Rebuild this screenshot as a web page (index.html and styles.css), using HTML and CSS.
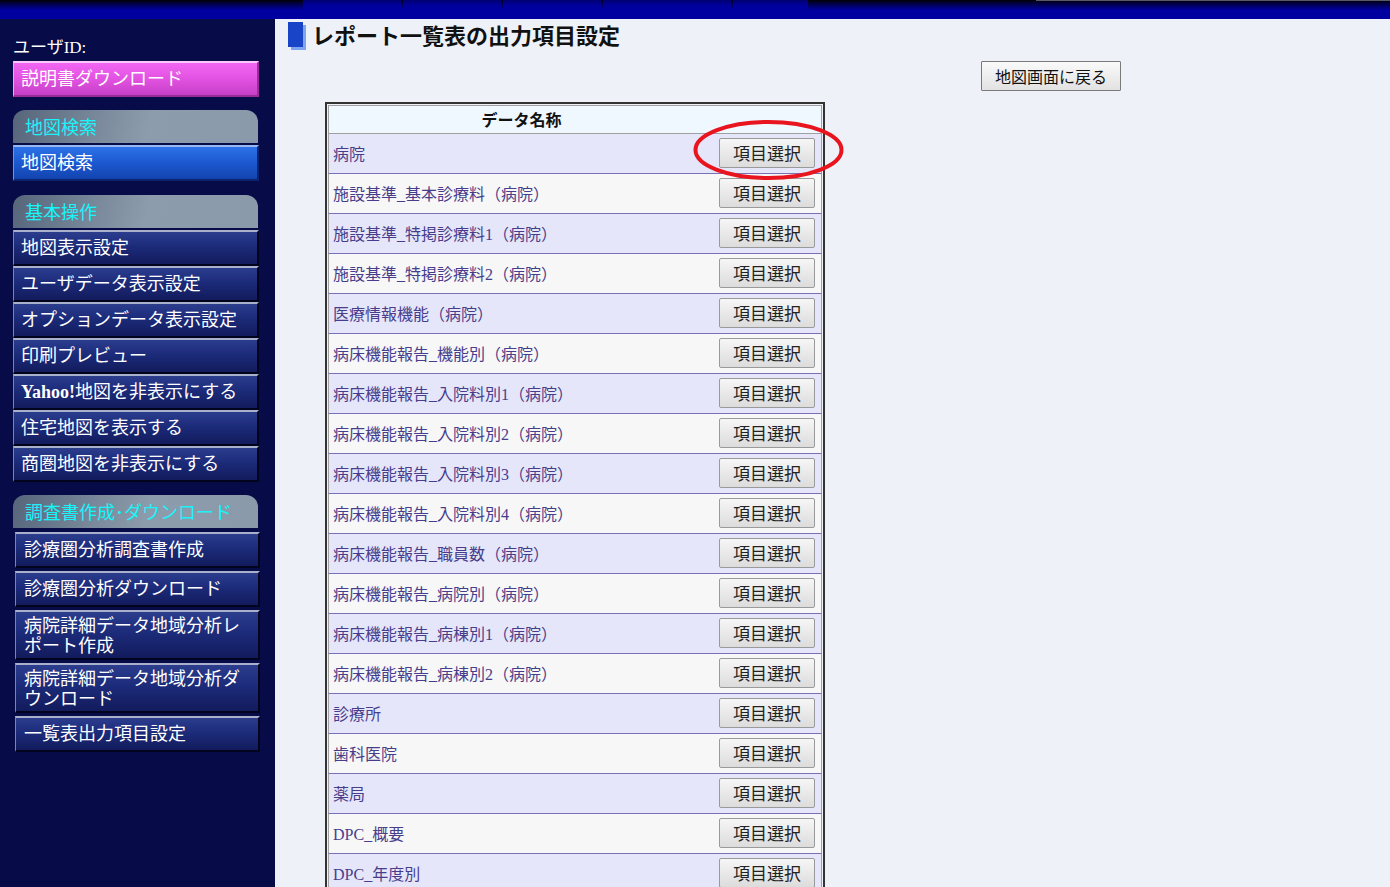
FILE: index.html
```html
<!DOCTYPE html>
<html lang="ja">
<head>
    <meta charset="UTF-8">
    <title>レポート一覧表の出力項目設定</title>
    <link rel="stylesheet" href="styles.css">
</head>
<body>

<div class="topbar">
    <div class="tb-dark"></div>
    <div class="tb-tab tab1"></div>
    <div class="tb-tab tab2"></div>
    <div class="tb-tab tab3"></div>
    <div class="tb-tab tab4"></div>
    <div class="tb-tab tab5"></div>
    <div class="tb-rest"><div class="tb-line"></div></div>
</div>

<div class="wrap">
    <div class="sidebar">
        <div class="userid">ユーザID:</div>
        <a class="menu-btn pink">説明書ダウンロード</a>

        <div class="group-head">地図検索</div>
        <a class="menu-btn blue">地図検索</a>

        <div class="group-head">基本操作</div>
        <a class="menu-btn">地図表示設定</a>
        <a class="menu-btn">ユーザデータ表示設定</a>
        <a class="menu-btn">オプションデータ表示設定</a>
        <a class="menu-btn">印刷プレビュー</a>
        <a class="menu-btn"><b>Yahoo!</b>地図を非表示にする</a>
        <a class="menu-btn">住宅地図を表示する</a>
        <a class="menu-btn">商圏地図を非表示にする</a>

        <div class="group-head">調査書作成･ダウンロード</div>
        <div class="sub-list">
            <a class="menu-btn">診療圏分析調査書作成</a>
            <a class="menu-btn">診療圏分析ダウンロード</a>
            <a class="menu-btn multi">病院詳細データ地域分析レポート作成</a>
            <a class="menu-btn multi">病院詳細データ地域分析ダウンロード</a>
            <a class="menu-btn">一覧表出力項目設定</a>
        </div>
    </div>

    <div class="main">
        <h1 class="page-title"><span class="title-mark"></span>レポート一覧表の出力項目設定</h1>

        <div class="back-row">
            <button class="back-btn">地図画面に戻る</button>
        </div>

        <table class="list-table">
            <tr>
                <th class="name-col">データ名称</th>
                <th class="sel-col"></th>
            </tr>
            <tr class="odd">
                <td class="name-col">病院</td>
                <td class="sel-col">
                    <span class="mark-wrap">
                        <button class="sel-btn">項目選択</button>
                        <svg class="red-mark" width="153" height="62" viewBox="0 0 153 62">
                            <ellipse cx="76.5" cy="31" rx="73" ry="28" fill="none" stroke="#e8141e" stroke-width="4"/>
                        </svg>
                    </span>
                </td>
            </tr>
            <tr class="even"><td class="name-col">施設基準_基本診療料（病院）</td><td class="sel-col"><button class="sel-btn">項目選択</button></td></tr>
            <tr class="odd"><td class="name-col">施設基準_特掲診療料1（病院）</td><td class="sel-col"><button class="sel-btn">項目選択</button></td></tr>
            <tr class="even"><td class="name-col">施設基準_特掲診療料2（病院）</td><td class="sel-col"><button class="sel-btn">項目選択</button></td></tr>
            <tr class="odd"><td class="name-col">医療情報機能（病院）</td><td class="sel-col"><button class="sel-btn">項目選択</button></td></tr>
            <tr class="even"><td class="name-col">病床機能報告_機能別（病院）</td><td class="sel-col"><button class="sel-btn">項目選択</button></td></tr>
            <tr class="odd"><td class="name-col">病床機能報告_入院料別1（病院）</td><td class="sel-col"><button class="sel-btn">項目選択</button></td></tr>
            <tr class="even"><td class="name-col">病床機能報告_入院料別2（病院）</td><td class="sel-col"><button class="sel-btn">項目選択</button></td></tr>
            <tr class="odd"><td class="name-col">病床機能報告_入院料別3（病院）</td><td class="sel-col"><button class="sel-btn">項目選択</button></td></tr>
            <tr class="even"><td class="name-col">病床機能報告_入院料別4（病院）</td><td class="sel-col"><button class="sel-btn">項目選択</button></td></tr>
            <tr class="odd"><td class="name-col">病床機能報告_職員数（病院）</td><td class="sel-col"><button class="sel-btn">項目選択</button></td></tr>
            <tr class="even"><td class="name-col">病床機能報告_病院別（病院）</td><td class="sel-col"><button class="sel-btn">項目選択</button></td></tr>
            <tr class="odd"><td class="name-col">病床機能報告_病棟別1（病院）</td><td class="sel-col"><button class="sel-btn">項目選択</button></td></tr>
            <tr class="even"><td class="name-col">病床機能報告_病棟別2（病院）</td><td class="sel-col"><button class="sel-btn">項目選択</button></td></tr>
            <tr class="odd"><td class="name-col">診療所</td><td class="sel-col"><button class="sel-btn">項目選択</button></td></tr>
            <tr class="even"><td class="name-col">歯科医院</td><td class="sel-col"><button class="sel-btn">項目選択</button></td></tr>
            <tr class="odd"><td class="name-col">薬局</td><td class="sel-col"><button class="sel-btn">項目選択</button></td></tr>
            <tr class="even"><td class="name-col">DPC_概要</td><td class="sel-col"><button class="sel-btn">項目選択</button></td></tr>
            <tr class="odd"><td class="name-col">DPC_年度別</td><td class="sel-col"><button class="sel-btn">項目選択</button></td></tr>
        </table>
    </div>
</div>

</body>
</html>
```

FILE: styles.css
```css
html, body {
    margin: 0;
    height: 100%;
    overflow: hidden;
}

body {
    display: flex;
    flex-direction: column;
    background-color: #eef2f8;
    font-family: "Liberation Serif", "Noto Sans CJK JP", serif;
}

/* top bar */
.topbar {
    flex: none;
    height: 19px;
    display: flex;
    background: linear-gradient(#000008, #00005a 5px, #0000a0 10px);
}

.tb-dark {
    width: 303px;
}

.tb-tab {
    height: 100%;
    background: linear-gradient(#000070, #00009a 5px, #0000a0 8px);
}

.tab1 { width: 98px; }
.tab2 { width: 98px; margin-left: 2px; }
.tab3 { width: 98px; margin-left: 2px; }
.tab4 { width: 128px; margin-left: 2px; }
.tab5 { width: 75px; margin-left: 2px; }

.tb-rest {
    flex: 1;
}

.tb-line {
    margin-left: 228px;
    border-top: 1px solid #5a5a66;
}

.wrap {
    flex: 1;
    display: flex;
    min-height: 0;
}

/* side menu */
.sidebar {
    width: 275px;
    flex: none;
    box-sizing: border-box;
    padding-left: 13px;
    background-color: #070b48;
}

.userid {
    color: #fff;
    font-size: 17px;
    line-height: 22px;
    margin: 18px 0 2px;
}

.menu-btn {
    display: block;
    width: 246px;
    height: 36px;
    box-sizing: border-box;
    padding-left: 7px;
    color: #fff;
    font-family: "Liberation Serif", "Noto Sans CJK JP", serif;
    font-size: 18px;
    line-height: 33px;
    white-space: nowrap;
    border-style: solid;
    border-width: 2px 2px 2px 1px;
    border-color: #a9b0cc #02031c #02031c #7b84b0;
    background: linear-gradient(#2c3d8e, #1c2b7a 45%, #121b5c);
}

.menu-btn.pink {
    border-color: #f8c8f8 #9a2c9a #9a2c9a #f0a8f0;
    background: linear-gradient(#f266f2, #e252e2 50%, #c640c6);
}

.menu-btn.blue {
    border-color: #9ab8f0 #0c2470 #0c2470 #7096e0;
    background: linear-gradient(#2c72e8, #1c58d0 50%, #1244ae);
    margin-top: 2px;
}

.group-head {
    width: 245px;
    height: 33px;
    box-sizing: border-box;
    margin-top: 13px;
    padding-left: 12px;
    border-radius: 12px 12px 0 0;
    color: #18f4fa;
    font-family: "Noto Sans CJK JP", sans-serif;
    font-size: 18px;
    line-height: 33px;
    background: linear-gradient(105deg, #56657a 0%, #7a8a9c 35%, #8c9cac 55%, #8a9aaa 100%);
}

.group-head + .menu-btn {
    margin-top: 2px;
}

.pink + .group-head {
    margin-top: 13px;
}

.blue + .group-head {
    margin-top: 14px;
}

.sub-list {
    margin-top: 4px;
    margin-left: 2px;
}

.sub-list .menu-btn {
    width: 245px;
    padding-left: 8px;
    margin-bottom: 3px;
}

.sub-list .menu-btn.multi {
    height: 50px;
    padding: 4px 12px 0 8px;
    line-height: 20px;
    white-space: normal;
}

/* main area */
.main {
    flex: 1;
    padding-left: 13px;
    overflow: hidden;
}

.page-title {
    display: flex;
    align-items: center;
    margin: 0;
    color: #111;
    font-family: "Noto Sans CJK JP", sans-serif;
    font-size: 22px;
    font-weight: bold;
    line-height: 30px;
}

.title-mark {
    width: 15px;
    height: 25px;
    margin-right: 9px;
    background-color: #1a44c8;
    box-shadow: 3px 3px 0 #7ea6f0;
}

.back-row {
    margin: 12px 0 0 693px;
}

.back-btn {
    height: 30px;
    padding: 0 13px;
    border: 1px solid #7a7a7a;
    border-radius: 1px;
    color: #111;
    font-family: "Noto Sans CJK JP", sans-serif;
    font-size: 16px;
    background: linear-gradient(#fafafa, #e2e2e2);
}

.list-table {
    margin: 11px 0 0 37px;
    width: 500px;
    border: 2px solid #333;
    padding: 1px;
    border-collapse: separate;
    border-spacing: 0;
    background-color: #eef2f8;
}

.list-table th {
    height: 25px;
    padding: 0 0 2px;
    background-color: #f0f8ff;
    border-top: 1px solid #a0a0a0;
    border-bottom: 1px solid #a0a0a0;
    color: #111;
    font-family: "Noto Sans CJK JP", sans-serif;
    font-size: 16px;
    font-weight: bold;
}

.list-table td {
    height: 37px;
    padding: 0 0 2px;
    border-bottom: 1px solid #7a70b6;
    color: #483d8b;
    font-size: 16px;
}

.list-table .name-col {
    border-left: 1px solid #a0a0a0;
    padding-left: 4px;
}

.list-table th.name-col {
    padding-left: 0;
}

.list-table .sel-col {
    width: 96px;
    padding: 0 6px 2px 5px;
    border-right: 1px solid #a0a0a0;
}

.odd td {
    background-color: #e6e6fa;
}

.even td {
    background-color: #f7f7f7;
}

.sel-btn {
    display: block;
    width: 96px;
    height: 30px;
    padding: 0;
    border: 1px solid #9a9a9a;
    border-radius: 2px;
    color: #222;
    font-family: "Noto Sans CJK JP", sans-serif;
    font-size: 17px;
    background: linear-gradient(#f6f6f6, #dcdcdc);
}

.mark-wrap {
    position: relative;
    display: block;
}

.red-mark {
    position: absolute;
    left: -27px;
    top: -19px;
}
```
